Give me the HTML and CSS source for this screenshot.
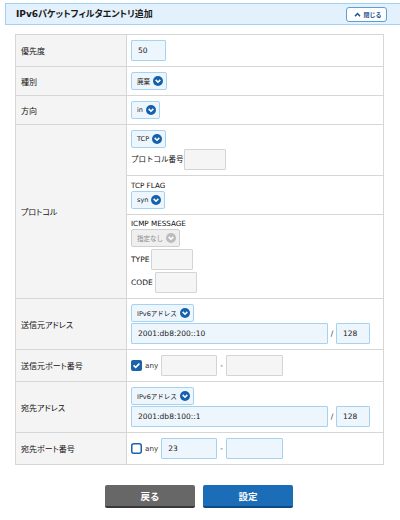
FILE: index.html
```html
<!DOCTYPE html>
<html lang="ja">
<head>
<meta charset="utf-8">
<title>IPv6パケットフィルタエントリ追加</title>
<link rel="stylesheet" href="styles.css">
</head>
<body>
<div class="panel-head">
  <h1 class="panel-title">IPv6パケットフィルタエントリ追加</h1>
  <button class="close-btn" type="button"><svg class="up" viewBox="0 0 8 6" width="7" height="5"><path d="M1 5 L4 1.8 L7 5" fill="none" stroke="#1d4f8f" stroke-width="1.8"/></svg>閉じる</button>
</div>

<table class="form">
  <colgroup><col class="c-label"><col></colgroup>
  <tr>
    <th>優先度</th>
    <td><div class="field"><input class="txt w35" value="50"></div></td>
  </tr>
  <tr>
    <th>種別</th>
    <td><div class="field"><span class="select">廃棄<svg class="arr" viewBox="0 0 10 10"><circle cx="5" cy="5" r="5"/><path d="M2.7 3.9 L5 6.2 L7.3 3.9"/></svg></span></div></td>
  </tr>
  <tr>
    <th>方向</th>
    <td><div class="field"><span class="select">in<svg class="arr" viewBox="0 0 10 10"><circle cx="5" cy="5" r="5"/><path d="M2.7 3.9 L5 6.2 L7.3 3.9"/></svg></span></div></td>
  </tr>
  <tr>
    <th rowspan="3">プロトコル</th>
    <td>
      <div class="stack g1">
        <div class="field"><span class="select">TCP<svg class="arr" viewBox="0 0 10 10"><circle cx="5" cy="5" r="5"/><path d="M2.7 3.9 L5 6.2 L7.3 3.9"/></svg></span></div>
        <div class="field"><span class="lbl">プロトコル番号</span><input class="txt dis w42"></div>
      </div>
    </td>
  </tr>
  <tr>
    <td>
      <div class="stack">
        <div class="cap">TCP FLAG</div>
        <div class="field"><span class="select">syn<svg class="arr" viewBox="0 0 10 10"><circle cx="5" cy="5" r="5"/><path d="M2.7 3.9 L5 6.2 L7.3 3.9"/></svg></span></div>
      </div>
    </td>
  </tr>
  <tr>
    <td class="icmp">
      <div class="stack">
        <div class="cap">ICMP MESSAGE</div>
        <div class="field"><span class="select off">指定なし<svg class="arr" viewBox="0 0 10 10"><circle cx="5" cy="5" r="5"/><path d="M2.7 3.9 L5 6.2 L7.3 3.9"/></svg></span></div>
        <div class="field mt2"><span class="lbl sp">TYPE</span><input class="txt dis w42"></div>
        <div class="field mt2"><span class="lbl sp">CODE</span><input class="txt dis w42"></div>
      </div>
    </td>
  </tr>
  <tr>
    <th>送信元アドレス</th>
    <td>
      <div class="stack g1">
        <div class="field"><span class="select">IPv6アドレス<svg class="arr" viewBox="0 0 10 10"><circle cx="5" cy="5" r="5"/><path d="M2.7 3.9 L5 6.2 L7.3 3.9"/></svg></span></div>
        <div class="field"><input class="txt w197" value="2001:db8:200::10"><span class="sep">/</span><input class="txt w34" value="128"></div>
      </div>
    </td>
  </tr>
  <tr>
    <th>送信元ポート番号</th>
    <td>
      <div class="field">
        <svg class="chk" viewBox="0 0 11 11" width="11" height="11"><rect x="0" y="0" width="11" height="11" rx="2" fill="#1b62ab"/><path d="M2.6 5.4 L4.7 7.4 L8.4 3.6" fill="none" stroke="#fff" stroke-width="1.6"/></svg>
        <span class="any">any</span>
        <input class="txt dis w56">
        <span class="dash">-</span>
        <input class="txt dis w57">
      </div>
    </td>
  </tr>
  <tr>
    <th>宛先アドレス</th>
    <td>
      <div class="stack g1">
        <div class="field"><span class="select">IPv6アドレス<svg class="arr" viewBox="0 0 10 10"><circle cx="5" cy="5" r="5"/><path d="M2.7 3.9 L5 6.2 L7.3 3.9"/></svg></span></div>
        <div class="field"><input class="txt w197" value="2001:db8:100::1"><span class="sep">/</span><input class="txt w34" value="128"></div>
      </div>
    </td>
  </tr>
  <tr>
    <th>宛先ポート番号</th>
    <td>
      <div class="field">
        <svg class="chk" viewBox="0 0 11 11" width="11" height="11"><rect x="0.75" y="0.75" width="9.5" height="9.5" rx="2" fill="#fff" stroke="#1b62ab" stroke-width="1.5"/></svg>
        <span class="any">any</span>
        <input class="txt w56" value="23">
        <span class="dash">-</span>
        <input class="txt w57">
      </div>
    </td>
  </tr>
</table>

<div class="actions">
  <button class="btn back" type="button">戻る</button>
  <button class="btn submit" type="button">設定</button>
</div>
</body>
</html>
```

FILE: styles.css
```css
* { box-sizing: border-box; }

body {
  margin: 0;
  background: #fff;
  color: #1a1a1a;
  font-family: "DejaVu Sans", "Noto Sans CJK JP", sans-serif;
}

.panel-head {
  margin: 3px 0 0 5px;
  height: 22px;
  border: 1px solid #a3d1f2;
  border-right: none;
  background: #e3f1fc;
  display: flex;
  align-items: center;
  justify-content: space-between;
  padding: 0 13px 0 10px;
}

.panel-title {
  margin: 0;
  font-size: 9px;
  font-weight: bold;
  font-feature-settings: "palt";
  color: #1a1a1a;
  line-height: 12px;
}

.close-btn {
  width: 41px;
  height: 15px;
  padding: 0 0 0 3px;
  margin: 0;
  border: 1px solid #5c9fd6;
  border-radius: 3px;
  background: #fff;
  color: #1d4f8f;
  font-family: "Noto Sans CJK JP", sans-serif;
  font-size: 6px;
  font-weight: bold;
  display: flex;
  align-items: center;
  justify-content: center;
  gap: 2px;
}

.form {
  margin: 9px 0 0 15px;
  width: 369px;
  table-layout: fixed;
  border-collapse: collapse;
}

.c-label { width: 111px; }

.form th,
.form td {
  border: 1px solid #d6d6d6;
}

.form th {
  background: #f4f4f4;
  font-family: "Noto Sans CJK JP", sans-serif;
  font-size: 8px;
  font-weight: normal;
  text-align: left;
  vertical-align: middle;
  padding: 0 5px;
  font-feature-settings: "palt";
  color: #111;
}

.form td {
  background: #fff;
  padding: 5px 4px;
  vertical-align: top;
}

.form td.icmp { padding-top: 4px; }

.field {
  display: flex;
  align-items: center;
}

.stack {
  display: flex;
  flex-direction: column;
  align-items: flex-start;
}

.stack.g1 { gap: 1px; }

.mt2 { margin-top: 2px; }

.cap {
  font-size: 7.2px;
  line-height: 10px;
  height: 10px;
  color: #111;
}

.lbl {
  font-family: "DejaVu Sans", "Noto Sans CJK JP", sans-serif;
  font-size: 7.5px;
  line-height: 10px;
  color: #111;
}

.lbl.sp { margin-right: 2px; }

.txt {
  height: 21px;
  margin: 0;
  border: 1px solid #a6d2f2;
  border-radius: 1px;
  background: #eef6fd;
  padding: 0 6px;
  font-family: "DejaVu Sans", sans-serif;
  font-size: 7.5px;
  color: #1a1a1a;
  outline: none;
}

.txt.dis {
  background: #f5f5f5;
  border-color: #d4d4d4;
}

.w35 { width: 35px; }
.w34 { width: 34px; }
.w42 { width: 42px; }
.w56 { width: 56px; }
.w57 { width: 57px; }
.w197 { width: 197px; }

.select {
  display: inline-flex;
  align-items: center;
  gap: 3px;
  height: 18px;
  padding: 0 3px 0 5px;
  border: 1px solid #a6d2f2;
  border-radius: 2px;
  background: #eef6fd;
  font-size: 6.5px;
  color: #222;
  white-space: nowrap;
}

.arr {
  width: 10px;
  height: 10px;
  flex: none;
}

.arr circle { fill: #1560ac; }

.arr path {
  fill: none;
  stroke: #fff;
  stroke-width: 1.6;
}

.select.off {
  background: #efefef;
  border-color: #cfcfcf;
  color: #888;
}

.select.off .arr circle { fill: #bcbcbc; }

.sep {
  width: 8px;
  text-align: center;
  font-size: 7.5px;
  color: #333;
}

.chk { flex: none; }

.any {
  font-size: 7.2px;
  color: #333;
  margin: 0 3px 0 3px;
}

.dash {
  width: 9px;
  text-align: center;
  font-size: 7.5px;
  color: #333;
}

.actions {
  display: flex;
  justify-content: center;
  gap: 8px;
  margin-top: 20px;
  padding-right: 2px;
}

.btn {
  width: 90px;
  height: 23px;
  margin: 0;
  padding: 0;
  border: none;
  border-radius: 2px;
  font-family: "Noto Sans CJK JP", sans-serif;
  font-size: 9.5px;
  font-weight: bold;
  color: #fff;
}

.btn.back {
  background: #676767;
  border-bottom: 2px solid #383838;
}

.btn.submit {
  background: #1a6db6;
  border-bottom: 2px solid #0c4a87;
}
```
